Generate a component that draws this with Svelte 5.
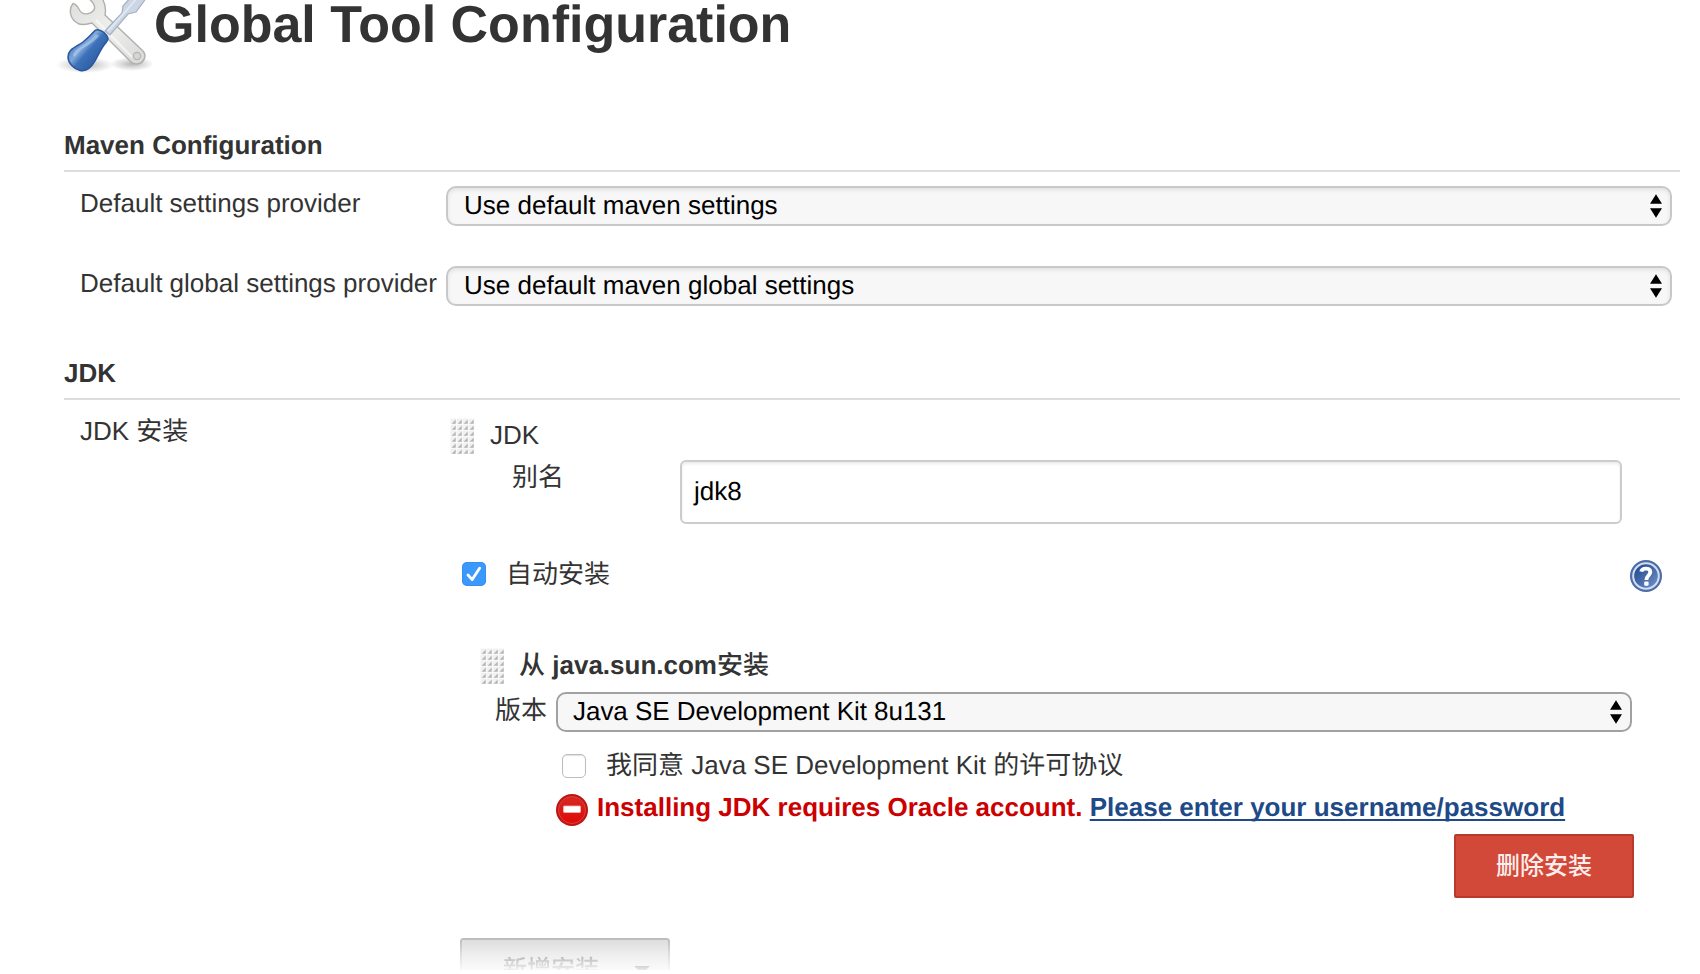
<script>
  const settings = [
    { label: 'Default settings provider', value: 'Use default maven settings' },
    { label: 'Default global settings provider', value: 'Use default maven global settings' }
  ];
  const cols = [0, 1, 2, 3];
  const rows = [0, 1, 2, 3, 4, 5];
</script>

{#snippet grip()}
  <svg class="grip" width="24" height="36" viewBox="0 0 24 36">
    {#each rows as r}
      {#each cols as c}
        <rect x={c * 6 + 0.5} y={r * 6 + 0.5} width="5.5" height="5.5" fill="#f1f1f1" />
        <path d="M{c * 6 + 5.7} {r * 6 + 1.6}v4.1h-4z" fill="#b4b4b4" />
      {/each}
    {/each}
  </svg>
{/snippet}

{#snippet arrows()}
  <svg width="12" height="24" viewBox="0 0 12 24">
    <path d="M6 0.3L12 9.7H0zM0 14.3H12L6 23.7z" fill="#000" />
  </svg>
{/snippet}

<div class="page">
  <header>
    <svg width="96" height="74" viewBox="0 0 96 74">
      <defs>
        <linearGradient id="metal" x1="0" y1="0" x2="1" y2="1">
          <stop offset="0" stop-color="#dededc" />
          <stop offset="0.5" stop-color="#eeeeec" />
          <stop offset="1" stop-color="#d8d8d6" />
        </linearGradient>
        <linearGradient id="handle" x1="0.2" y1="0.2" x2="0.8" y2="0.75">
          <stop offset="0" stop-color="#4a7fc4" />
          <stop offset="0.35" stop-color="#7fa8da" />
          <stop offset="0.55" stop-color="#3c71b8" />
          <stop offset="1" stop-color="#2c5da3" />
        </linearGradient>
        <radialGradient id="shade">
          <stop offset="0" stop-color="#000" stop-opacity="0.28" />
          <stop offset="1" stop-color="#000" stop-opacity="0" />
        </radialGradient>
      </defs>
      <ellipse cx="29" cy="65" rx="29" ry="8" fill="url(#shade)" />
      <ellipse cx="76" cy="64" rx="22" ry="7" fill="url(#shade)" />
      <path d="M17 3.5C12.5 9 13.500 19 22 23.500C27 26 33 23.500 36 23L73.500 60.500C77 65 84 65 87 61C90 57 89 53 86.500 50.500L49 15C50 10 49.500 4 46 -2H32C37 2 40 6 38 10C35 14 29 15 25.500 12.500C22 10 23 5 17 3.500Z" fill="url(#metal)" stroke="#b0b0ad" stroke-width="1.400" />
      <path d="M40 20L76 57" stroke="#fff" stroke-width="2" opacity="0.6" />
      <circle cx="81" cy="56" r="3.600" fill="#d6d6d4" stroke="#b4b4b2" stroke-width="1.200" />
      <path d="M49 31L66 13L67 6L75 -3H91L80 12L72 14L54 35Z" fill="#cbd5e3" stroke="#a5b1c2" stroke-width="1.200" />
      <path d="M52 31L70 11L81 -2" fill="none" stroke="#dfe7f1" stroke-width="2" />
      <path d="M38 31.500C40 28.500 45 30 48 32.500C52 36 53 39 50.500 42C45 48 43 54 39 61C35 68 30 72 24 70.500C18 69 12 63 12 57C12 49 20 47 27 42C32 38 35 35 38 31.500Z" fill="url(#handle)" stroke="#2a569b" stroke-width="1.500" />
      <path d="M40 34C34 43 24 46 19 51C15 56 18 59 21 54C26 47 37 44 43 36Z" fill="#c4daf3" opacity="0.5" />
    </svg>
    <h1>Global Tool Configuration</h1>
  </header>

  <section class="maven">
    <h2>Maven Configuration</h2>
    {#each settings as s}
      <div class="setting">
        <label>{s.label}</label>
        <div class="select"><span>{s.value}</span>{@render arrows()}</div>
      </div>
    {/each}
  </section>

  <section class="jdk">
    <h2>JDK</h2>
    <div class="body">
      <div class="side">JDK 安装</div>
      <div class="main">
        <div class="item-head">{@render grip()}<span>JDK</span></div>
        <div class="name-row">
          <label>别名</label>
          <div class="input">jdk8</div>
        </div>
        <div class="auto-row">
          <svg width="24" height="24" viewBox="0 0 24 24">
            <rect width="24" height="24" rx="5" fill="#3b99fc" />
            <rect x="0.5" y="0.5" width="23" height="23" rx="4.500" fill="none" stroke="#2f86e6" stroke-opacity="0.5" />
            <path d="M6 13L10.200 17.600L17.600 6.200" fill="none" stroke="#fff" stroke-width="2.800" stroke-linecap="round" stroke-linejoin="round" />
          </svg>
          <span>自动安装</span>
          <svg class="help" width="32" height="32" viewBox="0 0 32 32">
            <defs>
              <linearGradient id="blue" x1="0" y1="0" x2="1" y2="1">
                <stop offset="0.2" stop-color="#2a5298" />
                <stop offset="1" stop-color="#7795c8" />
              </linearGradient>
            </defs>
            <circle cx="16" cy="16" r="16" fill="#4c6da8" />
            <circle cx="16" cy="16" r="12.800" fill="url(#blue)" stroke="#d3dff1" stroke-width="2" />
            <path d="M11.300 11.700C12 7.600 20.300 7.400 20.300 12C20.300 15.500 16.400 15.600 16.400 20" fill="none" stroke="#fff" stroke-width="3.900" />
            <rect x="14.200" y="21.600" width="4.400" height="4.200" rx="1" fill="#fff" />
          </svg>
        </div>

        <div class="installer">
          <div class="item-head"><span class="grip-wrap">{@render grip()}</span><b><span class="han">从</span> java.sun.com<span class="han">安装</span></b></div>
          <div class="version">
            <label>版本</label>
            <div class="select dark"><span>Java SE Development Kit 8u131</span>{@render arrows()}</div>
          </div>
          <div class="agree">
            <i class="box"></i>
            <span>我同意 Java SE Development Kit 的许可协议</span>
          </div>
          <div class="error">
            <svg width="32" height="32" viewBox="0 0 32 32">
              <defs>
                <linearGradient id="red" x1="0" y1="0" x2="0" y2="1">
                  <stop offset="0" stop-color="#d62a22" />
                  <stop offset="1" stop-color="#e00808" />
                </linearGradient>
              </defs>
              <circle cx="16" cy="16" r="16" fill="#bd1414" />
              <circle cx="16" cy="16" r="13.500" fill="url(#red)" stroke="#dc4038" stroke-width="1" />
              <rect x="7.500" y="12" width="17" height="6.500" rx="0.800" fill="#fff" stroke="#f2b5b0" stroke-width="0.800" />
            </svg>
            <p>Installing JDK requires Oracle account. <a href="#credentials">Please enter your username/password</a></p>
          </div>
          <button class="delete">删除安装</button>
        </div>

        <div class="add"><span>新增安装</span><i></i></div>
      </div>
    </div>
  </section>
</div>

<style>
  .page {
    box-sizing: border-box;
    width: 1700px;
    height: 974px;
    overflow: hidden;
    padding: 0 20px 0 64px;
    background: #fff;
    color: #333;
    font: 26px/30px 'Liberation Sans', 'Noto Sans CJK SC', sans-serif;
    text-rendering: geometricPrecision;
  }
  svg { display: block; flex: none; }
  header { display: flex; height: 130px; margin-left: -8px; }
  h1 { margin: -5px 0 0 2px; font-size: 52px; line-height: 60px; white-space: nowrap; }
  h2 {
    box-sizing: border-box;
    height: 42px;
    margin: 0;
    border-bottom: 2px solid #ddd;
    font-size: 26px;
    line-height: 30px;
  }
  .maven { height: 228px; }
  .setting { display: flex; height: 66px; padding: 14px 8px 0 16px; }
  .setting label { width: 366px; padding-top: 2px; white-space: nowrap; }
  .select {
    box-sizing: border-box;
    display: flex;
    flex: 1;
    align-items: center;
    justify-content: space-between;
    height: 40px;
    padding: 0 8px 0 16px;
    border: 2px solid #c8c8c8;
    border-radius: 10px;
    background: #f7f7f7;
    box-shadow: inset 0 2px 4px rgba(0, 0, 0, 0.09);
    color: #000;
  }
  .select span { margin-top: -2px; }
  .select.dark { border-color: #a1a1a1; box-shadow: none; padding: 0 8px 0 15px; }
  .body { display: flex; }
  .side { width: 370px; padding: 16px 0 0 16px; }
  .main { flex: 1; padding-top: 18px; }
  .item-head { display: flex; gap: 16px; height: 36px; }
  .item-head > span, .item-head b { padding-top: 2px; }
  .item-head .grip-wrap { padding: 0; }
  .han { font-weight: 500; }
  .name-row { display: flex; margin: 6px 58px 0 62px; }
  .name-row label { width: 168px; padding-top: 2px; }
  .input {
    box-sizing: border-box;
    flex: 1;
    height: 64px;
    padding: 14px 12px;
    border: 2px solid #ccc;
    border-radius: 6px;
    box-shadow: inset 0 2px 3px rgba(0, 0, 0, 0.08);
    color: #000;
  }
  .auto-row { display: flex; align-items: flex-start; height: 88px; padding: 36px 18px 0 12px; }
  .auto-row > svg:first-child { margin-top: 2px; }
  .auto-row span { margin: -1px 0 0 20px; }
  .help { margin-left: auto; }
  .installer { display: flex; flex-direction: column; padding: 0 46px 0 30px; }
  .installer .item-head { gap: 15px; height: 44px; }
  .version { display: flex; margin: 0 2px 0 15px; }
  .version label { width: 61px; padding-top: 3px; }
  .version .select span { letter-spacing: -0.04px; }
  .agree { display: flex; align-items: center; gap: 20px; height: 30px; margin: 18px 0 0 82px; }
  .box {
    box-sizing: border-box;
    width: 24px;
    height: 24px;
    margin-top: 2px;
    border: 1.5px solid #bdbdbd;
    border-radius: 5px;
    box-shadow: inset 0 1px 1px rgba(0, 0, 0, 0.12);
  }
  .error { display: flex; gap: 9px; height: 40px; margin: 14px 0 0 76px; }
  .error p { margin: -2px 0 0; color: #c00; font-weight: bold; white-space: nowrap; }
  .error a { color: #204a87; text-decoration-thickness: 2px; text-underline-offset: 3px; text-decoration-skip-ink: none; }
  .delete {
    align-self: flex-end;
    width: 180px;
    height: 64px;
    padding: 0;
    border: 2px solid #b93a2c;
    border-radius: 2px;
    background: #d24939;
    color: #fceeec;
    font: 500 24px/30px 'Liberation Sans', 'Noto Sans CJK SC', sans-serif;
  }
  .add {
    box-sizing: border-box;
    display: flex;
    justify-content: space-between;
    width: 210px;
    height: 32px;
    margin: 40px 0 0 10px;
    padding: 15px 18px 0 41px;
    overflow: hidden;
    border: solid #bbb;
    border-width: 2px 2px 0;
    border-radius: 3px 3px 0 0;
    background: #dcdcdc;
    color: #666;
    font-size: 24px;
    font-weight: 500;
    -webkit-mask-image: linear-gradient(#000, rgba(0, 0, 0, 0.5) 50%, rgba(0, 0, 0, 0.1));
    mask-image: linear-gradient(#000, rgba(0, 0, 0, 0.5) 50%, rgba(0, 0, 0, 0.1));
  }
  .add i { width: 16px; height: 8px; margin-top: 11px; background: #222; clip-path: polygon(0 0, 100% 0, 50% 100%); }
</style>
